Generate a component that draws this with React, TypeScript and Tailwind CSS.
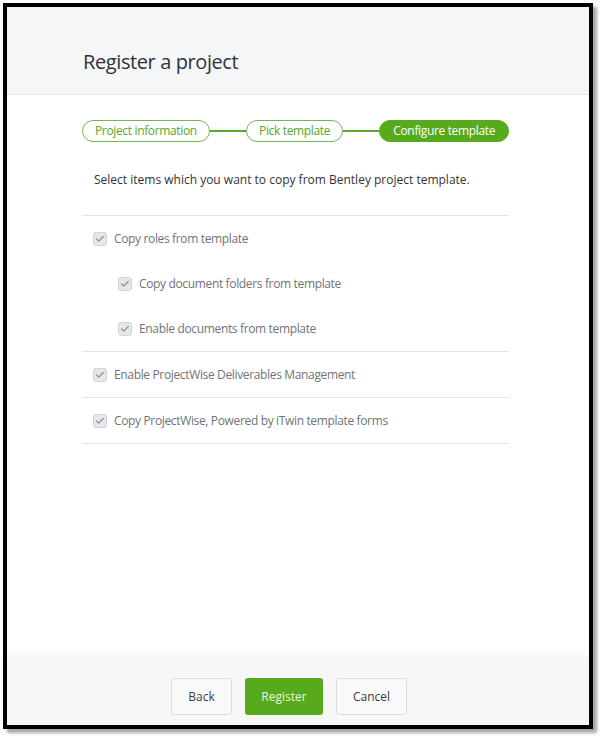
import { Check } from 'lucide-react'

type Item = {
  label: string
  nested?: boolean
}

const GROUPS: Item[][] = [
  [
    { label: 'Copy roles from template' },
    { label: 'Copy document folders from template', nested: true },
    { label: 'Enable documents from template', nested: true },
  ],
  [{ label: 'Enable ProjectWise Deliverables Management' }],
  [{ label: 'Copy ProjectWise, Powered by iTwin template forms' }],
]

function Checkbox() {
  return (
    <span className="flex h-[14px] w-[14px] shrink-0 items-center justify-center rounded-[3px] border border-[#d2d4d7] bg-[#e5e7ea]">
      <Check size={10} strokeWidth={3} className="text-[#8c8f93]" />
    </span>
  )
}

function StepPill({ label, active }: { label: string; active?: boolean }) {
  return (
    <div
      className={
        active
          ? 'flex h-[22px] items-center rounded-full border border-[#56aa1c] bg-[#56aa1c] px-[13px] text-[12px] tracking-[-0.35px] text-white'
          : 'flex h-[22px] items-center rounded-full border border-[#72b84f] bg-white px-[12px] text-[12px] tracking-[-0.35px] text-[#56a62a]'
      }
    >
      {label}
    </div>
  )
}

export default function App() {
  return (
    <div className="h-[740px] w-[602px] bg-white pl-[3px] pt-[3px] font-['Open_Sans',sans-serif]">
      <div className="flex h-[726px] w-[590px] flex-col border-4 border-black bg-white shadow-[4px_4px_3px_rgba(0,0,0,0.35)]">
        <header className="flex h-[88px] shrink-0 items-end border-b border-[#e2e4e7] bg-[#f5f6f8] pb-[19px] pl-[76px]">
          <h1 className="text-[20px] leading-[26px] tracking-[-0.4px] text-[#2f3338]">Register a project</h1>
        </header>

        <main className="flex-1 pl-[75px] pr-[80px]">
          <div className="mt-[25px] flex items-center">
            <StepPill label="Project information" />
            <div className="h-[2px] flex-1 bg-[#5aa82e]" />
            <StepPill label="Pick template" />
            <div className="h-[2px] flex-1 bg-[#5aa82e]" />
            <StepPill label="Configure template" active />
          </div>

          <p className="mt-[29px] pl-[12px] text-[12px] leading-[18px] text-[#333]">
            Select items which you want to copy from Bentley project template.
          </p>

          <div className="mt-[26px] border-t border-[#e3e4e6]">
            {GROUPS.map((group, i) => (
              <div key={i} className="border-b border-[#e3e4e6]">
                {group.map((item) => (
                  <div
                    key={item.label}
                    className={
                      item.nested
                        ? 'flex h-[45px] items-center gap-[7px] pl-[36px] text-[12px] tracking-[-0.35px] text-[#707377]'
                        : 'flex h-[45px] items-center gap-[7px] pl-[11px] text-[12px] tracking-[-0.35px] text-[#707377]'
                    }
                  >
                    <Checkbox />
                    <span>{item.label}</span>
                  </div>
                ))}
              </div>
            ))}
          </div>
        </main>

        <footer className="flex h-[68px] shrink-0 justify-center gap-[13px] bg-[#f7f7f7] pr-[18px] pt-[21px] shadow-[0_-5px_6px_rgba(0,0,0,0.03)]">
          <button className="h-[37px] w-[61px] rounded-[3px] border border-[#dcdcdc] bg-[#f9f9f9] text-[12px] text-[#3a3d41]">
            Back
          </button>
          <button className="h-[37px] w-[78px] rounded-[3px] bg-[#56aa1c] text-[12px] text-[#eaf6df]">
            Register
          </button>
          <button className="h-[37px] w-[71px] rounded-[3px] border border-[#dcdcdc] bg-[#f9f9f9] text-[12px] text-[#3a3d41]">
            Cancel
          </button>
        </footer>
      </div>
    </div>
  )
}
